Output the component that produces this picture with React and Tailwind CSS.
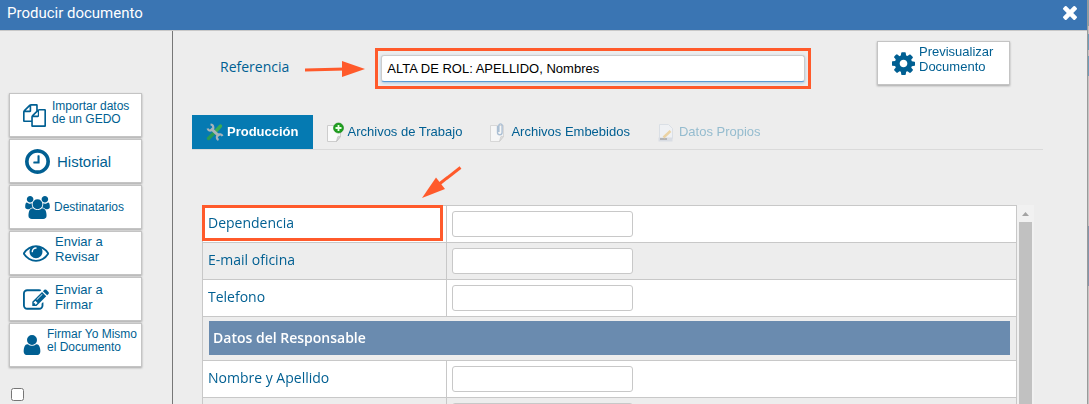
import clsx from "clsx";

// Icon outlines on a 1792 grid, x/y/w/h crop the box to the drawing
const ICONS = {
  files: {
    w: 1792,
    d: "M1696 384q40 0 68 28t28 68v1216q0 40-28 68t-68 28H736q-40 0-68-28t-28-68v-288H96q-40 0-68-28t-28-68V640q0-40 20-88t48-76L476 68q28-28 76-48t88-20h416q40 0 68 28t28 68v328q68-40 128-40h416zm-544 213L853 896h299V597zM512 213L213 512h299V213zm196 647l316-316V128H640v416q0 40-28 68t-68 28H128v640h512v-256q0-40 20-88t48-76zm956 804V512h-416v416q0 40-28 68t-68 28H768v640h896z",
  },
  clock: {
    x: 128,
    y: 128,
    w: 1536,
    h: 1536,
    d: "M1024 544v448q0 14-9 23t-23 9H672q-14 0-23-9t-9-23v-64q0-14 9-23t23-9h224V544q0-14 9-23t23-9h64q14 0 23 9t9 23zm416 352q0-148-73-273t-198-198-273-73-273 73-198 198-73 273 73 273 198 198 273 73 273-73 198-198 73-273zm224 0q0 209-103 385.5T1281.5 1561 896 1664t-385.5-103T231 1281.5 128 896t103-385.5T510.5 231 896 128t385.5 103T1561 510.5 1664 896z",
  },
  users: {
    w: 1920,
    d: "M593 896q-162 5-265 128H194q-82 0-138-40.5T0 865q0-353 124-353 6 0 43.5 21t97.5 42.5T384 597q67 0 133-23-5 37-5 66 0 139 81 256zm1071 637q0 120-73 189.5t-194 69.5H523q-121 0-194-69.5T256 1533q0-53 3.5-103.5t14-109T300 1212t43-97.5 62-81 85.5-53.5T602 960q10 0 43 21.5t73 48 107 48 135 21.5 135-21.5 107-48 73-48 43-21.5q61 0 111.5 20t85.5 53.5 62 81 43 97.5 26.5 108.5 14 109 3.5 103.5zM640 256q0 106-75 181t-181 75-181-75-75-181 75-181T384 0t181 75 75 181zm704 384q0 159-112.5 271.5T960 1024 688.5 911.5 576 640t112.5-271.5T960 256t271.5 112.5T1344 640zm576 225q0 78-56 118.5t-138 40.5h-134q-103-123-265-128 81-117 81-256 0-29-5-66 66 23 133 23 59 0 119-21.5t97.5-42.5 43.5-21q124 0 124 353zm-128-609q0 106-75 181t-181 75-181-75-75-181 75-181 181-75 181 75 75 181z",
  },
  eye: {
    y: 384,
    w: 1792,
    h: 1152,
    d: "M1664 960q-152-236-381-353 61 104 61 225 0 185-131.5 316.5T896 1280t-316.5-131.5T448 832q0-121 61-225-229 117-381 353 133 205 333.5 326.5T896 1408t434.5-121.5T1664 960zM944 576q0-20-14-34t-34-14q-125 0-214.5 89.5T592 832q0 20 14 34t34 14 34-14 14-34q0-86 61-147t147-61q20 0 34-14t14-34zm848 384q0 34-20 69-140 230-376.5 368.5T896 1536t-499.5-139T20 1029q-20-35-20-69t20-69q140-229 376.5-368T896 384t499.5 139T1772 891q20 35 20 69z",
  },
  edit: {
    y: 128,
    w: 1792,
    h: 1408,
    d: "M888 1184l116-116-152-152-116 116v56h96v96h56zm440-720q-16-16-33 1L945 815q-17 17-1 33t33-1l350-350q17-17 1-33zm80 594v190q0 119-84.5 203.5T1120 1536H288q-119 0-203.5-84.5T0 1248V416q0-119 84.5-203.5T288 128h832q63 0 117 25 15 7 18 23 3 17-9 29l-49 49q-14 14-32 8-23-6-45-6H288q-66 0-113 47t-47 113v832q0 66 47 113t113 47h832q66 0 113-47t47-113v-126q0-13 9-22l64-64q15-15 35-7t20 29zm-96-738l288 288-672 672H640V992zm444 132l-92 92-288-288 92-92q28-28 68-28t68 28l152 152q28 28 28 68t-28 68z",
  },
  user: {
    x: 256,
    y: 128,
    w: 1280,
    h: 1536,
    d: "M1536 1399q0 109-62.5 187t-150.5 78H469q-88 0-150.5-78T256 1399q0-85 8.5-160.5t31.5-152 58.5-131 94-89T583 832q131 128 313 128t313-128q76 0 134.5 34.5t94 89 58.5 131 31.5 152 8.5 160.5zm-256-887q0 159-112.5 271.5T896 896 624.5 783.5 512 512t112.5-271.5T896 128t271.5 112.5T1280 512z",
  },
  cog: {
    x: 128,
    y: 128,
    w: 1536,
    h: 1536,
    d: "M1152 896q0-106-75-181t-181-75-181 75-75 181 75 181 181 75 181-75 75-181zm512-109v222q0 12-8 23t-20 13l-185 28q-19 54-39 91 35 50 107 138 10 12 10 25t-9 23q-27 37-99 108t-94 71q-12 0-26-9l-138-108q-44 23-91 38-16 136-29 186-7 28-36 28H785q-14 0-24.5-8.5T749 1634l-28-184q-49-16-90-37l-141 107q-10 9-25 9-14 0-25-11-126-114-165-168-7-10-7-23 0-12 8-23 15-21 51-66.5t54-70.5q-27-50-41-99l-183-27q-13-2-21-12.5t-8-23.5V785q0-12 8-23t19-13l186-28q14-46 39-92-40-57-107-138-10-12-10-24 0-10 9-23 26-36 98.5-107.5T465 288q13 0 26 10l138 107q44-23 91-38 16-136 29-186 7-28 36-28h222q14 0 24.5 8.5T1043 182l28 184q49 16 90 37l142-107q9-9 24-9 13 0 25 10 129 119 165 170 7 8 7 22 0 12-8 23-15 21-51 66.5t-54 70.5q26 50 41 98l183 28q13 2 21 12.5t8 23.5z",
  },
  times: {
    x: 302,
    y: 366,
    w: 1188,
    h: 1188,
    d: "M1490 1322q0 40-28 68l-136 136q-28 28-68 28t-68-28l-294-294-294 294q-28 28-68 28t-68-28l-136-136q-28-28-28-68t28-68l294-294-294-294q-28-28-28-68t28-68l136-136q28-28 68-28t68 28l294 294 294-294q28-28 68-28t68 28l136 136q28 28 28 68t-28 68l-294 294 294 294q28 28 28 68z",
  },
};

const Icon = ({ name, className }) => {
  const { x = 0, y = 0, w, h = 1792, d } = ICONS[name];
  return (
    <svg
      viewBox={`${x} ${y} ${w} ${h}`}
      className={clsx("shrink-0 fill-current", className)}
      aria-hidden="true"
    >
      <path d={d} />
    </svg>
  );
};

const ACTIONS = [
  {
    icon: "files",
    size: "w-[23px] h-[23px]",
    lines: ["Importar datos", "de un GEDO"],
    box: "pl-[13px] gap-[6px]",
    text: "text-[12px] leading-[13px] pb-[5px]",
  },
  {
    icon: "clock",
    size: "w-[25px] h-[25px]",
    lines: ["Historial"],
    box: "pl-[15px] gap-[7px]",
    text: "text-[15px] leading-[17px]",
  },
  {
    icon: "users",
    size: "w-[25px] h-[23px]",
    lines: ["Destinatarios"],
    box: "pl-[15px] gap-[4px]",
    text: "text-[12px] leading-[13px]",
  },
  {
    icon: "eye",
    size: "w-[26px] h-[17px]",
    lines: ["Enviar a", "Revisar"],
    box: "pl-[13px] gap-[6px]",
    text: "text-[13px] leading-[15px] pb-[8px]",
  },
  {
    icon: "edit",
    size: "w-[26px] h-[21px]",
    lines: ["Enviar a", "Firmar"],
    box: "pl-[13px] gap-[6px]",
    text: "text-[13px] leading-[15px] pb-[5px]",
  },
  {
    icon: "user",
    size: "w-[18px] h-[20px]",
    lines: ["Firmar Yo Mismo", "el Documento"],
    box: "pl-[13px] gap-[6px]",
    text: "text-[12px] leading-[13px] pb-[8px]",
  },
];

const ActionButton = ({ icon, size, lines, box, text }) => (
  <button
    type="button"
    className={clsx(
      "flex items-center w-[133px] h-[44px] shrink-0 bg-white border border-[#c4c4c4] shadow-[0_1px_2px_rgba(0,0,0,0.3)] text-[#005f92] text-left whitespace-nowrap",
      box
    )}
  >
    <Icon name={icon} className={size} />
    <span className={text}>
      {lines.map((line) => (
        <span key={line} className="block">
          {line}
        </span>
      ))}
    </span>
  </button>
);

const ToolsIcon = () => (
  <svg viewBox="0 0 18 18" className="w-[18px] h-[18px] shrink-0" fill="none" aria-hidden="true">
    <path d="M2.500 15.500L8 10" stroke="#2a9a55" strokeWidth="3.400" strokeLinecap="round" />
    <path d="M9 9L14.500 3" stroke="#3bab55" strokeWidth="3.400" strokeLinecap="round" />
    <path d="M5 5.500L13 13" stroke="#a9b4ba" strokeWidth="3" />
    <path d="M4.500 1.500a3 3 0 1 1-3 4M16.500 13a3 3 0 1 0-4 4" stroke="#a9b4ba" strokeWidth="2.200" />
  </svg>
);

const PageShape = () => (
  <>
    <path d="M.5 3.500h13v11l-4 5h-9z" fill="#fafafa" stroke="#cdcdcd" />
    <path d="M13.500 14.500c-2-.5-3 0-3 1l-1 4z" fill="#d6d6d6" stroke="#bdbdbd" strokeWidth=".7" />
  </>
);

const PageAddIcon = () => (
  <svg viewBox="0 0 18 20" className="w-[18px] h-5 shrink-0" aria-hidden="true">
    <PageShape />
    <circle cx="11.500" cy="6" r="5" fill="#1fa01f" stroke="#128012" strokeWidth=".6" />
    <path d="M11.500 3v6M8.500 6h6" fill="none" stroke="#e9ffe4" strokeWidth="1.800" />
  </svg>
);

const PageClipIcon = () => (
  <svg viewBox="0 0 18 20" className="w-[18px] h-5 shrink-0 opacity-70" aria-hidden="true">
    <PageShape />
    <path
      d="M7.500 4v6.500a2.300 2.300 0 0 0 4.600 0V3a1.700 1.700 0 0 0-3.200 0v7"
      fill="none"
      stroke="#8fabc8"
      strokeWidth="1.400"
    />
  </svg>
);

const PageEditIcon = () => (
  <svg viewBox="0 0 18 20" className="w-[18px] h-5 shrink-0 opacity-45" aria-hidden="true">
    <path d="M1.500 2.500h9l4 4v10h-13z" fill="#f2f6fc" stroke="#c3cedc" />
    <path d="M.5 15.500h14v4H.5z" fill="#c2cbd9" />
    <path d="M2 17h7" stroke="#555" strokeWidth="1.500" />
    <path d="M5.500 15.500l7-6.500" stroke="#e9b44c" strokeWidth="2.500" />
  </svg>
);

const TABS = [
  { label: "Producción", icon: ToolsIcon, active: true },
  { label: "Archivos de Trabajo", icon: PageAddIcon },
  { label: "Archivos Embebidos", icon: PageClipIcon },
  { label: "Datos Propios", icon: PageEditIcon, disabled: true },
];

const FIELDS = [
  { id: "dependencia", label: "Dependencia", marked: true },
  { id: "email", label: "E-mail oficina" },
  { id: "telefono", label: "Telefono" },
  { section: "Datos del Responsable" },
  { id: "nombre", label: "Nombre y Apellido" },
  { id: "extra", label: "" },
];

const FieldRow = ({ field }) => {
  if (field.section) {
    return (
      <tr className="even:bg-[#ededed]">
        <th colSpan={2} className="border border-[#c8c8c8] pt-[4px] pb-[5px] px-[6px] text-left">
          <div className="bg-[#6a8baf] text-white font-semibold h-[34px] leading-[34px] px-[4px]">
            {field.section}
          </div>
        </th>
      </tr>
    );
  }
  return (
    <tr className="odd:bg-white even:bg-[#ededed]">
      <td className="relative w-[244px] border border-[#c8c8c8] px-[5px] pt-[4px] pb-[6px]">
        <label htmlFor={field.id} className="block leading-[26px]">
          {field.label}
        </label>
        {field.marked && (
          <span className="absolute -left-px -top-px right-[3px] bottom-px border-[3px] border-[#ff5a2b]" />
        )}
      </td>
      <td className="border border-[#c8c8c8] px-[5px] py-[5px]">
        <input
          id={field.id}
          type="text"
          aria-label={field.label || "Dato"}
          className="block w-[181px] h-[26px] px-2 bg-white border border-[#c8c8c8] rounded-[3px] outline-none"
        />
      </td>
    </tr>
  );
};

const App = () => {
  // keep the cursor after the last character when the field takes focus
  const moveCursorToEnd = (e) => {
    const end = e.target.value.length;
    e.target.setSelectionRange(end, end);
  };

  return (
    <div className="flex h-screen overflow-hidden bg-[#ededed] font-['Liberation_Sans',Arial,sans-serif] text-[#005f92]">
      <div className="flex flex-col flex-1 min-w-0">
        <header className="flex items-center justify-between h-[31px] shrink-0 pl-[7px] pr-[10px] pb-[5px] bg-[#3a75b3] border-b border-[#c8c8c8] text-white">
          <h1 className="font-[Roboto,sans-serif] text-[15px] leading-[18px]">Producir documento</h1>
          <button type="button" aria-label="Cerrar">
            <Icon name="times" className="w-[14px] h-[14px]" />
          </button>
        </header>

        <div className="flex flex-1 min-h-0">
          <aside className="flex flex-col w-[173px] shrink-0 gap-[2px] pl-[9px] pt-[62px] border-r border-[#777]">
            {ACTIONS.map((action) => (
              <ActionButton key={action.icon} {...action} />
            ))}
            <input
              type="checkbox"
              aria-label="Seleccionar"
              className="w-[13px] h-[13px] shrink-0 mt-[19px] ml-[2px]"
            />
          </aside>

          <main className="flex flex-col flex-1 min-w-0 pt-[10px]">
            <div className="flex items-start pl-[47px] pr-[77px]">
              <div className="flex flex-1 items-center h-[41px] mt-[7px] mr-[66px]">
                <label
                  htmlFor="referencia"
                  className="font-['Open_Sans',sans-serif] text-[14px] leading-5 pb-[4px]"
                >
                  Referencia
                </label>
                <svg viewBox="0 0 60 16" className="w-[60px] h-4 shrink-0 ml-[16px] mr-[10px]" aria-hidden="true">
                  <path d="M0 9L40 8" stroke="#ff5a2b" strokeWidth="3" />
                  <path d="M37 0L60 8L37 16z" fill="#ff5a2b" />
                </svg>
                <div className="flex-1 border-[3px] border-[#ff5a2b] px-[3px] py-1">
                  <input
                    id="referencia"
                    type="text"
                    autoFocus
                    onFocus={moveCursorToEnd}
                    defaultValue="ALTA DE ROL: APELLIDO, Nombres"
                    className="block w-full h-[27px] px-[5px] bg-white border border-[#ccc] border-b-[#5a9bd5] rounded-[3px] shadow-[0_1px_3px_rgba(90,155,213,0.5)] text-[13px] text-black outline-none"
                  />
                </div>
              </div>
              <ActionButton
                icon="cog"
                size="w-[23px] h-[23px]"
                lines={["Previsualizar", "Documento"]}
                box="pl-[14px] gap-[4px]"
                text="text-[13px] leading-[15px] pb-[8px]"
              />
            </div>

            <nav className="flex mt-[26px] ml-[19px] mr-[44px] border-b border-[#dadada] text-[13px]">
              {TABS.map(({ label, icon: TabIcon, active, disabled }) => (
                <button
                  key={label}
                  type="button"
                  disabled={disabled}
                  className={clsx(
                    "flex items-center h-[34px] px-[14px] gap-[3px] whitespace-nowrap",
                    active && "bg-[#057ab2] text-white font-bold",
                    disabled && "text-[#95bccf]"
                  )}
                >
                  <TabIcon />
                  {label}
                </button>
              ))}
            </nav>

            <div className="relative flex flex-1 min-h-0 mt-[55px] ml-[29px] mr-[53px]">
              <svg viewBox="0 0 40 33" className="absolute left-[220px] -top-[39px] w-10 h-[33px]" aria-hidden="true">
                <path d="M38.500 1.500L16 19" stroke="#ff5a2b" strokeWidth="3" />
                <path d="M0 32L14 11.500L23 23z" fill="#ff5a2b" />
              </svg>
              <div className="flex-1 min-w-0 overflow-hidden font-['Open_Sans',sans-serif] text-[14px]">
                <table className="w-full border-collapse">
                  <tbody>
                    {FIELDS.map((field) => (
                      <FieldRow key={field.id || field.section} field={field} />
                    ))}
                  </tbody>
                </table>
              </div>
              <div className="flex flex-col items-center w-[17px] shrink-0 bg-[#f1f1f1]">
                <svg viewBox="0 0 17 17" className="w-[17px] h-[17px] shrink-0" aria-hidden="true">
                  <path d="M5 11L8.500 7L12 11z" fill="#a3a3a3" />
                </svg>
                <div className="flex-1 w-[13px] bg-[#c1c1c1]" />
              </div>
            </div>
          </main>
        </div>
      </div>

      {/* sliver of the page behind the dialog */}
      <div className="flex flex-col w-[2px] shrink-0 border-l border-[#9a9a9a] bg-[#c4c4c4]">
        <div className="h-[26px] bg-[#86a0aa]" />
        <div className="h-[8px]" />
        <div className="h-[16px] bg-[#6f9db8]" />
        <div className="h-[6px]" />
        <div className="h-[20px] bg-[#6f9db8]" />
        <div className="h-[150px]" />
        <div className="h-[60px] bg-[#8595aa]" />
      </div>
    </div>
  );
};

export default App;
